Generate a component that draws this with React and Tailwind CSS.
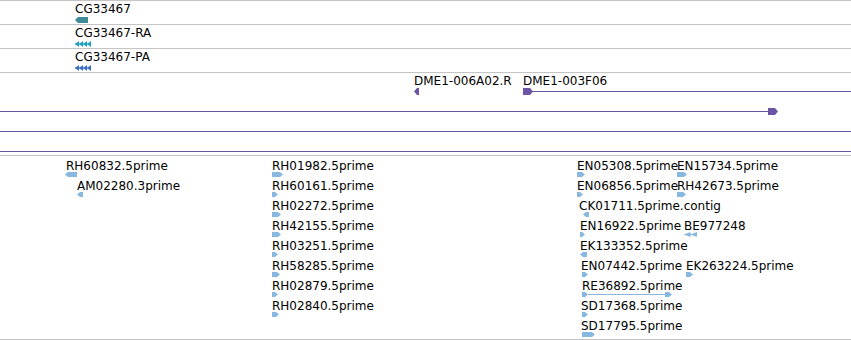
import React from 'react';

const PURPLE = '#6b53a5';
const EST = '#88b7df';

// small feature glyph drawn as svg
function Glyph({ w, h = 5, dir = 'right', color, teeth = 0 }) {
  let shapes = [];
  if (teeth > 0) {
    const step = w / teeth;
    shapes.push(<rect key="l" x={0} y={h / 2 - 0.5} width={w} height={1} fill={color} />);
    for (let i = 0; i < teeth; i++) {
      const x0 = i * step;
      shapes.push(
        <polygon key={i} points={`${x0},${h / 2} ${x0 + step},0 ${x0 + step},${h}`} fill={color} />
      );
    }
  } else if (dir === 'right') {
    shapes.push(
      <polygon key="a" points={`0,0 ${w - 3},0 ${w},${h / 2} ${w - 3},${h} 0,${h}`} fill={color} />
    );
  } else {
    shapes.push(
      <polygon key="a" points={`3,0 ${w},0 ${w},${h} 3,${h} 0,${h / 2}`} fill={color} />
    );
  }
  return (
    <svg className="block shrink-0" width={w} height={h} viewBox={`0 0 ${w} ${h}`}>
      {shapes}
    </svg>
  );
}

// a feature sits at its genomic x on the canvas; label above, glyph below
function Feature({ x, name, children, glyphShift = 0, gap = 0 }) {
  return (
    <div className="absolute top-0 flex flex-col" style={{ left: x, rowGap: gap }}>
      <span className="whitespace-nowrap text-[12px] leading-[12px] text-black">{name}</span>
      <div style={{ marginLeft: glyphShift }}>{children}</div>
    </div>
  );
}

const geneTracks = [
  { name: 'CG33467', color: '#3f8a94', w: 13, teeth: 0 },
  { name: 'CG33467-RA', color: '#1c9fc7', w: 16, teeth: 4 },
  { name: 'CG33467-PA', color: '#3a6dc5', w: 16, teeth: 4 },
];

// EST rows: each entry [label, labelX, glyphOffset, glyphW, dir]
const estRows = [
  [['RH60832.5prime', 66, -1, 12, 'left'], ['RH01982.5prime', 272, 0, 11, 'right'], ['EN05308.5prime', 577, 0, 8, 'right'], ['EN15734.5prime', 677, 0, 10, 'right']],
  [['AM02280.3prime', 77, 0, 6, 'left'], ['RH60161.5prime', 272, 0, 6, 'right'], ['EN06856.5prime', 577, 0, 6, 'right'], ['RH42673.5prime', 677, 0, 9, 'right']],
  [['RH02272.5prime', 272, 0, 9, 'right'], ['CK01711.5prime.contig', 579, 4, 6, 'left']],
  [['RH42155.5prime', 272, 0, 9, 'right'], ['EN16922.5prime', 580, 0, 5, 'right'], ['BE977248', 684, 0, 13, 'teeth']],
  [['RH03251.5prime', 272, 0, 6, 'right'], ['EK133352.5prime', 580, 0, 7, 'left']],
  [['RH58285.5prime', 272, 0, 8, 'right'], ['EN07442.5prime', 581, 1, 6, 'right'], ['EK263224.5prime', 686, 0, 7, 'right']],
  [['RH02879.5prime', 272, 0, 6, 'right'], ['RE36892.5prime', 582, 0, 90, 'spliced']],
  [['RH02840.5prime', 272, 0, 7, 'right'], ['SD17368.5prime', 581, 1, 6, 'right']],
  [['SD17795.5prime', 581, 1, 13, 'right']],
];

function EstGlyph({ w, dir }) {
  if (dir === 'teeth') return <Glyph w={w} dir="left" color={EST} teeth={2} />;
  if (dir === 'spliced') {
    return (
      <div className="flex items-center h-[5px]" style={{ width: w }}>
        <Glyph w={6} color={EST} />
        <div className="h-px flex-1 bg-[#88b7df]" />
        <Glyph w={7} color={EST} />
      </div>
    );
  }
  return <Glyph w={w} dir={dir} color={EST} />;
}

export default function App() {
  return (
    <div
      className="flex flex-col w-[851px] h-[340px] bg-white overflow-hidden"
      style={{ fontFamily: '"DejaVu Sans", sans-serif' }}
    >
      <div className="border-t border-[#c4c4c4]" />
      {geneTracks.map((t) => (
        <div key={t.name} className="h-[24px] shrink-0 border-b border-[#c4c4c4] pl-[75px] pt-[2px] flex flex-col gap-[2px]">
          <span className="text-[12px] leading-[12px] text-black">{t.name}</span>
          <Glyph w={t.w} h={6} dir="left" color={t.color} teeth={t.teeth} />
        </div>
      ))}

      {/* mapped clone track */}
      <div className="h-[83px] shrink-0 border-b border-[#c4c4c4] flex flex-col">
        <div className="relative h-[21px] shrink-0 mt-[2px]">
          <Feature x={414} name="DME1-006A02.R" gap={1}>
            <Glyph w={5} h={7} dir="left" color={PURPLE} />
          </Feature>
          <Feature x={523} name="DME1-003F06" gap={1}>
            <div className="flex items-center h-[7px] w-[328px]">
              <Glyph w={10} h={7} dir="right" color={PURPLE} />
              <div className="h-px flex-1 -ml-[1px] bg-[#6b53a5]" />
            </div>
          </Feature>
        </div>
        <div className="h-[20px] shrink-0 pt-[12px]">
          <div className="flex items-center h-[7px] w-[778px]">
            <div className="h-px flex-1 bg-[#6b53a5]" />
            <Glyph w={10} h={7} dir="right" color={PURPLE} />
          </div>
        </div>
        <div className="h-[20px] shrink-0 pt-[15px]">
          <div className="h-px bg-[#6b53a5]" />
        </div>
        <div className="h-[20px] shrink-0 pt-[15px]">
          <div className="h-px bg-[#6b53a5]" />
        </div>
      </div>

      {/* EST track */}
      <div className="h-[184px] shrink-0 border-b border-[#c4c4c4] pt-[4px] flex flex-col">
        {estRows.map((row, i) => (
          <div key={i} className="relative h-[20px] shrink-0">
            {row.map(([name, lx, off, gw, dir]) => (
              <Feature key={name} x={lx} name={name} glyphShift={off}>
                <EstGlyph w={gw} dir={dir} />
              </Feature>
            ))}
          </div>
        ))}
      </div>
    </div>
  );
}
